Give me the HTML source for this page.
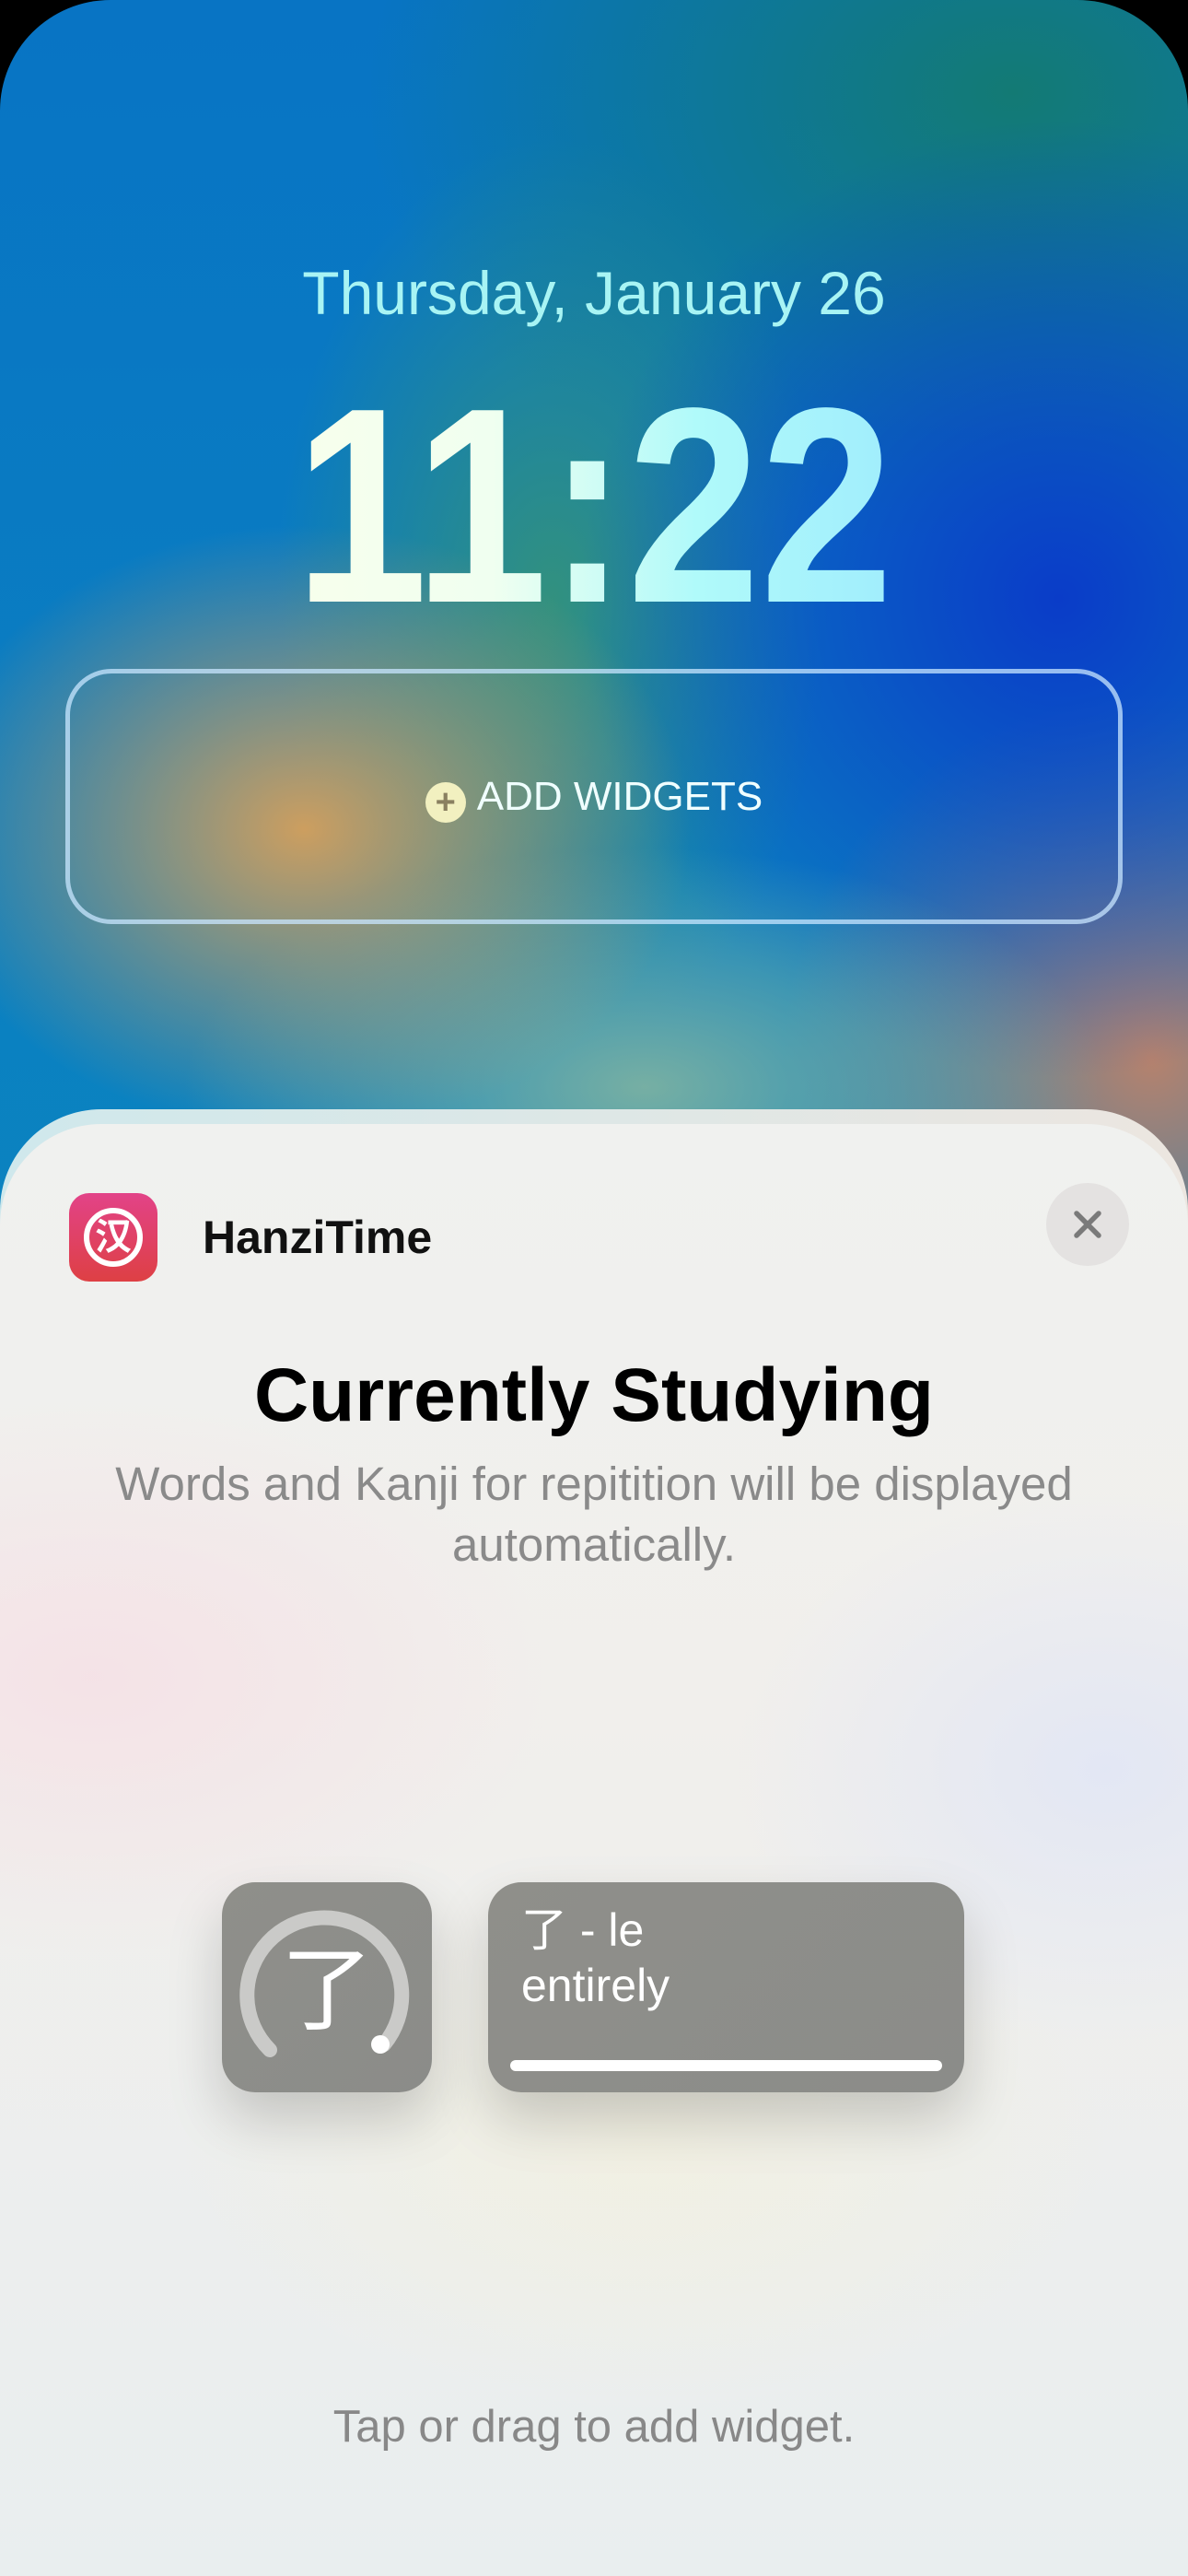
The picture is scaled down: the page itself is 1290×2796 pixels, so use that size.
<!DOCTYPE html>
<html><head><meta charset="utf-8"><style>
*{margin:0;padding:0;box-sizing:border-box}
html{width:1290px;height:2796px;overflow:hidden}
body{width:1290px;height:2796px;background:#000;overflow:hidden;position:relative;font-family:"Liberation Sans","Noto Sans CJK SC",sans-serif}
.wall{position:absolute;left:0;top:0;width:1290px;height:2796px;border-radius:120px 120px 0 0;overflow:hidden;
background:
radial-gradient(ellipse 420px 330px at 330px 900px,rgba(215,160,90,.95),rgba(215,160,90,0) 100%),
radial-gradient(ellipse 500px 260px at 700px 1180px,rgba(130,180,160,.9),rgba(130,180,160,0) 100%),
radial-gradient(ellipse 520px 520px at 1150px 650px,rgba(10,60,200,1),rgba(10,60,200,0) 100%),
radial-gradient(ellipse 400px 400px at 1250px 1150px,rgba(200,130,100,.9),rgba(200,130,100,0) 100%),
radial-gradient(ellipse 300px 500px at 600px 650px,rgba(60,150,110,.8),rgba(60,150,110,0) 100%),
radial-gradient(ellipse 700px 500px at 1100px 100px,#137a74,rgba(19,122,116,0) 100%),
linear-gradient(180deg,#0874c4 0%,#0b84c0 50%,#2aa0c0 100%);}
.date{position:absolute;top:280px;left:0;width:1290px;text-align:center;color:#a8f4f4;font-size:66px;font-weight:500}
.time{position:absolute;top:398px;left:0;width:1290px;text-align:center;font-size:302px;font-weight:700;line-height:1;transform:scaleX(0.86);transform-origin:645px 0;
background:linear-gradient(90deg,#ffffe8 0%,#f0fff0 40%,#b0fafa 60%,#90e0ff 100%);-webkit-background-clip:text;background-clip:text;color:transparent}
.wbox{position:absolute;left:71px;top:726px;width:1148px;height:277px;border-radius:50px;border:5px solid rgba(200,230,255,.75)}
.add{position:absolute;top:840px;left:0;width:1290px;text-align:center;color:#f0ffff;font-size:44px;font-weight:500}
.add span.p{display:inline-block;width:44px;height:44px;border-radius:50%;background:#f2f0c0;color:#8a8060;font-size:38px;line-height:44px;vertical-align:-4px;margin-right:12px;font-weight:700}
.back{position:absolute;left:0;top:1204px;width:1290px;height:1592px;border-radius:110px 110px 0 0;background:linear-gradient(90deg,#cfe8ec,#ece6e0)}
.sheet{position:absolute;left:0;top:1220px;width:1290px;height:1576px;border-radius:110px 110px 0 0;
background:radial-gradient(ellipse 500px 300px at 100px 600px,rgba(245,225,230,.9),rgba(245,225,230,0)),
radial-gradient(ellipse 400px 300px at 1200px 700px,rgba(225,230,245,.9),rgba(225,230,245,0)),
radial-gradient(ellipse 500px 300px at 700px 1100px,rgba(242,240,225,.9),rgba(242,240,225,0)),
linear-gradient(180deg,#f0f1ef 0%,#f1efec 40%,#e9eeef 100%)}
.icon{position:absolute;left:75px;top:1295px;width:96px;height:96px;border-radius:22px;background:linear-gradient(180deg,#e24388,#de4044)}
.icon .c{position:absolute;left:16px;top:16px;width:64px;height:64px;border-radius:50%;border:6px solid #fff;color:#fff;font-size:40px;line-height:52px;text-align:center;font-weight:700}
.name{position:absolute;left:220px;top:1314px;font-size:50px;font-weight:600;color:#111}
.close{position:absolute;left:1136px;top:1284px;width:90px;height:90px;border-radius:50%;background:#e4e2e1}
.title{position:absolute;top:1468px;left:0;width:1290px;text-align:center;font-size:82px;font-weight:700;color:#000}
.sub{position:absolute;top:1578px;left:60px;width:1170px;text-align:center;font-size:51px;line-height:66px;color:#8a8a8a}
.w{position:absolute;top:2043px;height:228px;border-radius:36px;background:linear-gradient(135deg,#8f8f8a,#8b8c89);box-shadow:0 30px 60px rgba(0,0,0,.18)}
.w1{left:241px;width:228px}
.w2{left:530px;width:517px}
.wt{position:absolute;left:36px;top:22px;color:#fff;font-size:50px;line-height:60px}
.bar{position:absolute;left:24px;right:24px;top:193px;height:12px;border-radius:6px;background:#fff}
.tap{position:absolute;top:2606px;left:0;width:1290px;text-align:center;font-size:49px;color:#888}
</style></head><body>
<div class="wall"></div>
<div class="date">Thursday, January 26</div>
<div class="time">11:22</div>
<div class="wbox"></div>
<div class="add"><span class="p">+</span>ADD WIDGETS</div>
<div class="back"></div>
<div class="sheet"></div>
<div class="icon"><div class="c">汉</div></div>
<div class="name">HanziTime</div>
<div class="close"><svg width="90" height="90" viewBox="0 0 90 90"><path d="M33 33L57 57M57 33L33 57" stroke="#7a7a7a" stroke-width="5.5" stroke-linecap="round"/></svg></div>
<div class="title">Currently Studying</div>
<div class="sub">Words and Kanji for repitition will be displayed automatically.</div>
<div class="w w1"><svg width="228" height="228" viewBox="0 0 228 228">
<path d="M52 182 A84 84 0 1 1 176 176" fill="none" stroke="#cacac8" stroke-width="16" stroke-linecap="round"/>
<circle cx="172" cy="176" r="10" fill="#fff"/>
<text x="114" y="152" text-anchor="middle" font-size="100" fill="#fff" font-family="Noto Sans CJK SC,sans-serif">了</text></svg></div>
<div class="w w2"><div class="wt">了 - le<br>entirely</div><div class="bar"></div></div>
<div class="tap">Tap or drag to add widget.</div>
</body></html>
